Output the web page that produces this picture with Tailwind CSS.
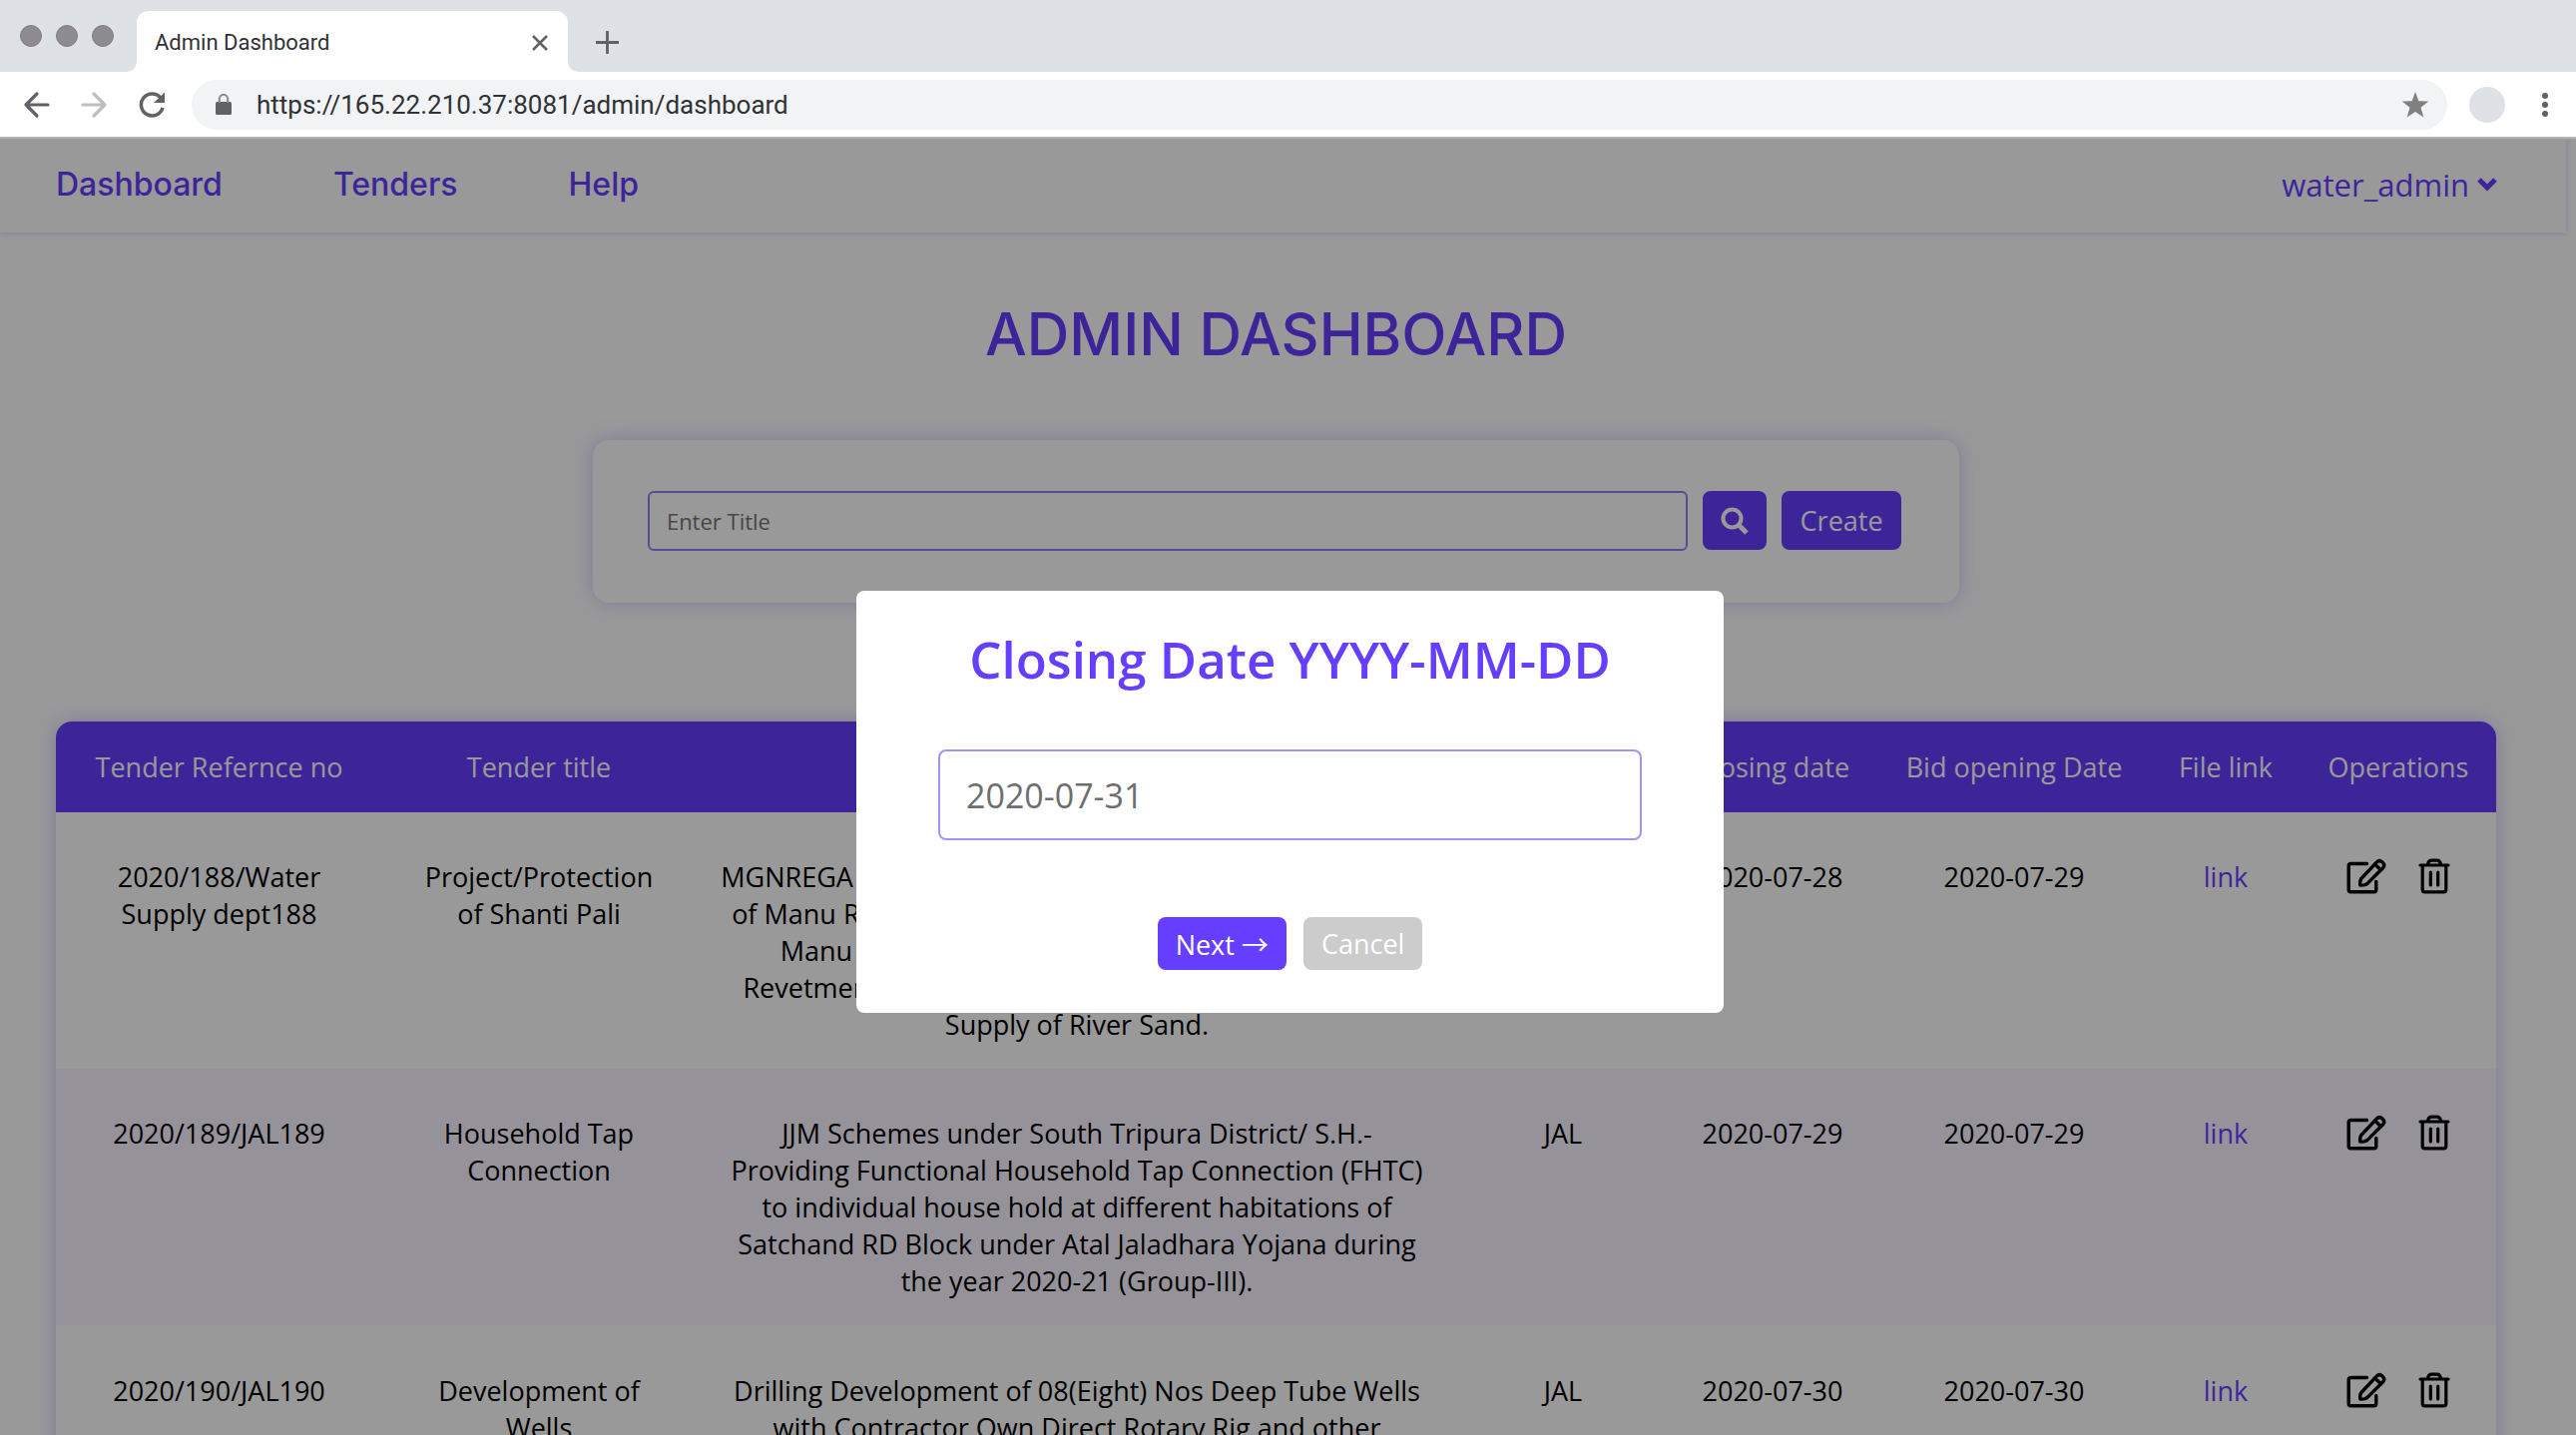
<!DOCTYPE html>
<html lang="en">
<head>
<meta charset="utf-8">
<meta name="viewport" content="width=device-width, initial-scale=1">
<title>Admin Dashboard</title>
<script src="https://cdn.jsdelivr.net/npm/@tailwindcss/browser@4"></script>
</head>
<body class="flex h-screen flex-col overflow-hidden bg-white font-['Open_Sans',sans-serif] text-[27px] leading-[37px] text-black">

<svg class="hidden" aria-hidden="true">
  <symbol id="edit" viewBox="0 0 40 36">
    <g fill="none" stroke="currentColor" stroke-width="3.4" stroke-linecap="round" stroke-linejoin="round">
      <path d="M20.500 5.500H4.500Q2.200 5.500 2.200 7.800V31.500Q2.200 33.800 4.500 33.800H27.500Q29.800 33.800 29.800 31.500V23.500"/>
      <path d="M14.800 20.500L30.500 3.800Q33 1.400 35.800 3.800L36.600 4.700Q39 7.200 36.600 9.700L21 25.400Q19.500 26.700 17.500 26.900L13.800 27.100Q13.200 23 14.800 20.500Z"/>
      <path d="M28.500 6L34.500 11.800"/>
    </g>
  </symbol>
  <symbol id="trash" viewBox="0 0 32 36">
    <g fill="none" stroke="currentColor" stroke-width="3.200" stroke-linecap="round" stroke-linejoin="round">
      <path d="M2 7H30M4.200 7V31.500Q4.200 33.800 6.500 33.800H25.500Q27.800 33.800 27.800 31.500V7M9.500 6.500Q10 2.200 13.500 2.200H18.500Q22 2.200 22.500 6.500"/>
      <path d="M12.300 14V27M19.700 14V27"/>
    </g>
  </symbol>
</svg>

<!-- Browser tabs -->
<header class="shrink-0 font-[Roboto,sans-serif]">
  <div class="flex h-[72px] items-end bg-[#dee1e6]">
    <div class="flex gap-3.5 self-center pl-5 pr-[11px]">
      <span class="size-[22px] rounded-full border border-[#7d7b80] bg-[#8e8c91]"></span>
      <span class="size-[22px] rounded-full border border-[#7d7b80] bg-[#8e8c91]"></span>
      <span class="size-[22px] rounded-full border border-[#7d7b80] bg-[#8e8c91]"></span>
    </div>
    <svg class="size-3 text-white" viewBox="0 0 12 12" fill="currentColor"><path d="M12 0V12H0Q12 12 12 0Z"/></svg>
    <div class="flex h-[61px] w-[432px] items-center justify-between rounded-t-xl bg-white pl-[18px] pr-5 pt-0.5 text-[22px] text-[#303236]">
      <span>Admin Dashboard</span>
      <button type="button" aria-label="Close tab"><svg class="size-4" viewBox="0 0 16 16" fill="none" stroke="#5f6368" stroke-width="2.500"><path d="M1 1L15 15M15 1L1 15"/></svg></button>
    </div>
    <svg class="size-3 text-white" viewBox="0 0 12 12" fill="currentColor"><path d="M0 0V12H12Q0 12 0 0Z"/></svg>
    <button type="button" aria-label="New tab" class="mb-[18px] ml-4"><svg class="size-[23px]" viewBox="0 0 23 23" fill="none" stroke="#5f6368" stroke-width="2.800"><path d="M11.500 0V23M0 11.500H23"/></svg></button>
  </div>
  <!-- Address bar -->
  <div class="flex h-[67px] items-center border-b-2 border-[#b4b4b4] pl-[23px] pr-[27px]">
    <button type="button" aria-label="Back"><svg class="size-7" viewBox="0 0 28 28" fill="none" stroke="#5f6368" stroke-width="3.200" stroke-linecap="round" stroke-linejoin="round"><path d="M25 14H3M14 3L3 14L14 25"/></svg></button>
    <button type="button" aria-label="Forward" class="ml-[30px]"><svg class="size-7" viewBox="0 0 28 28" fill="none" stroke="#bdbfc1" stroke-width="3.200" stroke-linecap="round" stroke-linejoin="round"><path d="M2 14H24M13 3L24 14L13 25"/></svg></button>
    <button type="button" aria-label="Reload" class="ml-[29px]"><svg class="size-7" viewBox="0 0 28 28"><path d="M25 17A11 11 0 1 1 23 7" fill="none" stroke="#5f6368" stroke-width="3.500"/><path d="M27 1.500V12H16Z" fill="#5f6368"/></svg></button>
    <div class="ml-[26px] flex h-[50px] flex-1 items-center rounded-full bg-[#f1f3f4] pl-[24px] pr-[18px]">
      <svg class="h-[22px] w-4 shrink-0" viewBox="0 0 16 22"><rect y="8" width="16" height="13" rx="1.500" fill="#5f6368"/><path d="M3.800 9V5.200A4.200 4.200 0 0 1 12.200 5.200V9" fill="none" stroke="#8b8f93" stroke-width="2.200"/></svg>
      <input aria-label="Address" value="https://165.22.210.37:8081/admin/dashboard" class="ml-[25px] min-w-0 flex-1 bg-transparent pt-0.5 text-[26px] text-[#303236]">
      <button type="button" aria-label="Bookmark"><svg class="size-7" viewBox="0 0 28 28"><path fill="#808080" d="M14 1L17.400 10.200L27.400 10.600L19.500 16.700L22.300 26.500L14 20.900L5.700 26.500L8.500 16.700L.6 10.600L10.600 10.200Z"/></svg></button>
    </div>
    <span class="ml-[22px] size-9 rounded-full bg-[#dee1e6]"></span>
    <button type="button" aria-label="Menu" class="ml-9"><svg class="h-6 w-2" viewBox="0 0 8 24" fill="#5f6368"><circle cx="4" cy="3" r="3"/><circle cx="4" cy="12" r="3"/><circle cx="4" cy="21" r="3"/></svg></button>
  </div>
</header>

<main class="relative min-h-0 flex-1 overflow-hidden">
  <nav class="mr-2.5 flex h-[94px] items-center gap-[111px] pb-1 pl-14 pr-[69px] font-[Inter,sans-serif] text-[32px] font-medium text-[#663eff] shadow-[0_1px_6px_rgba(102,62,255,0.25)]">
    <a href="#">Dashboard</a>
    <a href="#">Tenders</a>
    <a href="#">Help</a>
    <button type="button" class="ml-auto flex items-center gap-2 pt-0.5 font-['Open_Sans',sans-serif] text-[31px] font-normal">water_admin
      <svg class="h-4 w-5" viewBox="0 0 20 16" fill="none" stroke="currentColor" stroke-width="5"><path d="M2 3L10 11L18 3"/></svg>
    </button>
  </nav>

  <div class="pl-14 pr-20">
    <h1 class="pt-[66px] text-center font-[Inter,sans-serif] text-[59px] font-medium leading-[72px] text-[#663eff]">ADMIN DASHBOARD</h1>

    <form class="mx-auto mt-[70px] flex h-[163px] w-14/25 items-center gap-[15px] rounded-2xl pb-0.5 pl-[55px] pr-[58px] shadow-[0_0_20px_rgba(102,62,255,0.28)]">
      <input type="text" aria-label="Title" placeholder="Enter Title" class="h-[60px] min-w-0 flex-1 rounded-md border-2 border-[#9678ff] px-[17px] text-[22px] placeholder:text-[#757575]">
      <button type="button" aria-label="Search" class="flex h-[59px] w-16 items-center justify-center rounded-lg bg-[#663eff] text-white">
        <svg class="size-7" viewBox="0 0 28 28" fill="none" stroke="currentColor"><circle cx="11.500" cy="11.500" r="9" stroke-width="4"/><path d="M18 18L26 26" stroke-width="5"/></svg>
      </button>
      <button type="button" class="h-[59px] w-30 rounded-lg bg-[#663eff] text-white">Create</button>
    </form>

    <div class="mt-[119px] overflow-clip rounded-2xl shadow-[0_0_20px_rgba(102,62,255,0.28)]">
      <table class="w-full table-fixed text-center">
        <colgroup>
          <col class="w-[327px]"><col class="w-[314px]"><col class="w-[764px]"><col class="w-[210px]"><col class="w-[210px]"><col class="w-[274px]"><col class="w-[150px]"><col class="w-[196px]">
        </colgroup>
        <thead class="bg-[#663eff] text-white">
          <tr class="h-[91px] *:font-normal">
            <th scope="col">Tender Refernce no</th><th scope="col">Tender title</th><th scope="col">Description</th><th scope="col">Dept</th><th scope="col">Closing date</th><th scope="col">Bid opening Date</th><th scope="col">File link</th><th scope="col">Operations</th>
          </tr>
        </thead>
        <tbody>
          <tr class="h-[257px] align-top *:pt-[46px]">
            <td class="px-7">2020/188/Water Supply dept188</td>
            <td class="px-7">Project/Protection of Shanti Pali</td>
            <td class="px-6">MGNREGA Project/Protection of Shanti Pali on right bank<br>of Manu River at Shanti Pali area near the bridge under<br>Manu RD Block with Brick Block and Stone Piles<br>Revetment and Boulder Pitching with Carriages and a<br>Supply of River Sand.</td>
            <td>Water</td><td>2020-07-28</td><td>2020-07-29</td>
            <td><a href="#" class="text-[#663eff]">link</a></td>
            <td><div class="flex justify-center gap-8"><button type="button" aria-label="Edit"><svg class="h-9 w-10"><use href="#edit"/></svg></button><button type="button" aria-label="Delete"><svg class="h-9 w-8"><use href="#trash"/></svg></button></div></td>
          </tr>
          <tr class="h-[257px] bg-[#f8f5ff] align-top *:pt-[46px]">
            <td class="px-7">2020/189/JAL189</td>
            <td class="px-7">Household Tap Connection</td>
            <td class="px-6">JJM Schemes under South Tripura District/ S.H.- Providing Functional Household Tap Connection (FHTC) to individual house hold at different habitations of Satchand RD Block under Atal Jaladhara Yojana during the year 2020-21 (Group-III).</td>
            <td>JAL</td><td>2020-07-29</td><td>2020-07-29</td>
            <td><a href="#" class="text-[#663eff]">link</a></td>
            <td><div class="flex justify-center gap-8"><button type="button" aria-label="Edit"><svg class="h-9 w-10"><use href="#edit"/></svg></button><button type="button" aria-label="Delete"><svg class="h-9 w-8"><use href="#trash"/></svg></button></div></td>
          </tr>
          <tr class="h-[257px] align-top *:pt-[47px]">
            <td class="px-7">2020/190/JAL190</td>
            <td class="px-7">Development of Wells</td>
            <td class="px-6">Drilling Development of 08(Eight) Nos Deep Tube Wells<br>with Contractor Own Direct Rotary Rig and other</td>
            <td>JAL</td><td>2020-07-30</td><td>2020-07-30</td>
            <td><a href="#" class="text-[#663eff]">link</a></td>
            <td><div class="flex justify-center gap-8"><button type="button" aria-label="Edit"><svg class="h-9 w-10"><use href="#edit"/></svg></button><button type="button" aria-label="Delete"><svg class="h-9 w-8"><use href="#trash"/></svg></button></div></td>
          </tr>
        </tbody>
      </table>
    </div>
  </div>

  <!-- Modal dialog over the dimmed page -->
  <div class="absolute inset-0 flex items-start justify-center bg-black/40 pl-1 pt-[453px]">
    <form role="dialog" aria-labelledby="dialog-title" class="w-[869px] rounded-lg bg-white px-[82px] pb-[43px] pt-[34px] text-center">
      <h2 id="dialog-title" class="text-[51px] font-semibold leading-[68px] text-[#663eff]">Closing Date YYYY-MM-DD</h2>
      <input type="text" aria-labelledby="dialog-title" value="2020-07-31" class="mt-[57px] h-[91px] w-full rounded-lg border-2 border-[#a990ff] px-[26px] text-[34px] text-[#6e6e6e]">
      <div class="mt-[77px] flex justify-center gap-[17px]">
        <button type="button" class="h-[53px] rounded-lg bg-[#663eff] px-[18px] text-white">Next <span class="font-['Noto_Sans_CJK_JP',sans-serif]">→</span></button>
        <button type="button" class="h-[53px] rounded-lg bg-[#ccc] px-[18px] text-white">Cancel</button>
      </div>
    </form>
  </div>
</main>
</body>
</html>
